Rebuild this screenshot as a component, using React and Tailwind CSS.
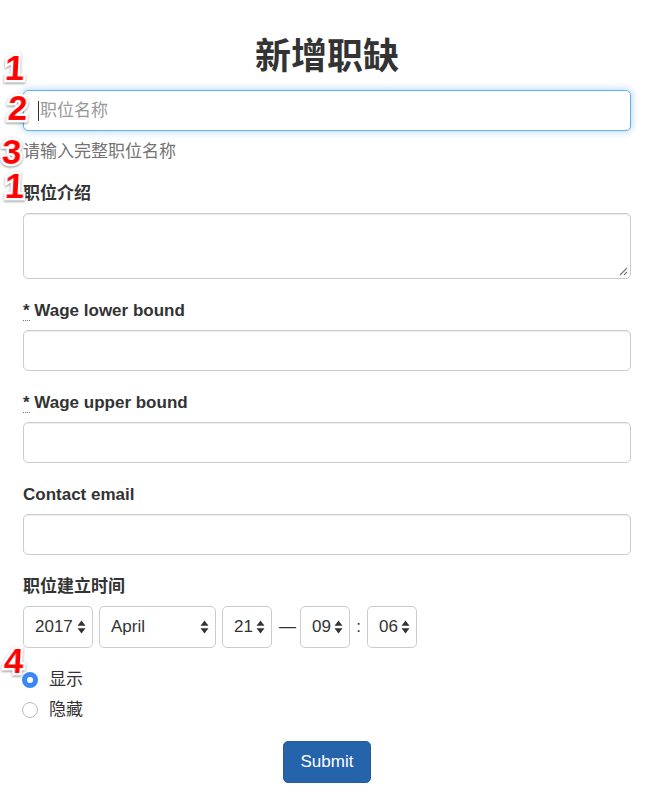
import React from "react";

const FONT = { fontFamily: '"Liberation Sans", "Noto Sans CJK SC", sans-serif' };

function Mark({ n, className }) {
  return (
    <span
      className={
        "absolute -skew-x-3 text-[35px] font-bold leading-none text-[#f00] [-webkit-text-stroke:5px_white] [paint-order:stroke_fill] drop-shadow-[0_1px_1px_rgba(0,0,0,0.45)] " +
        className
      }
    >
      {n}
    </span>
  );
}

function Arrows() {
  return (
    <svg
      className="pointer-events-none absolute right-[6px] top-1/2 -translate-y-1/2"
      width="9"
      height="14"
      viewBox="0 0 9 14"
    >
      <path d="M4.5 0.5 L8.5 5.8 L0.5 5.8 Z" fill="#333" />
      <path d="M4.5 13.5 L8.5 8.2 L0.5 8.2 Z" fill="#333" />
    </svg>
  );
}

function Select({ value, w }) {
  return (
    <div className={"relative h-[42px] rounded-[5px] border border-[#ccc] bg-white " + w}>
      <div className="flex h-full items-center pl-[11px] text-[17px] text-[#333]">{value}</div>
      <Arrows />
    </div>
  );
}

function Label({ children, req }) {
  return (
    <div className="text-[17px] font-bold leading-[24px] text-[#333]">
      {req && (
        <span className="border-b border-dotted border-[#777] leading-[14px]">*</span>
      )}
      {req && " "}
      {children}
    </div>
  );
}

function Input() {
  return (
    <div className="h-[41px] w-full rounded-[5px] border border-[#ccc] bg-white shadow-[inset_0_1px_1px_rgba(0,0,0,0.075)]" />
  );
}

function Radio({ checked, label }) {
  return (
    <div className="flex h-[30px] items-center">
      {checked ? (
        <span className="ml-[22px] flex h-[16px] w-[16px] items-center justify-center rounded-full bg-[#3a87f5]">
          <span className="h-[6px] w-[6px] rounded-full bg-white" />
        </span>
      ) : (
        <span className="ml-[22px] h-[16px] w-[16px] rounded-full border border-[#bbb] bg-white" />
      )}
      <span className="ml-[11px] text-[17px] text-[#333]">{label}</span>
    </div>
  );
}

export default function App() {
  return (
    <div className="relative flow-root h-[800px] w-[671px] bg-white" style={FONT}>
      <div className="ml-[23px] w-[608px] pt-[37px]">
        <h1 className="text-center text-[36px] font-bold leading-[40px] text-[#333]">
          新增职缺
        </h1>

        <div className="relative mt-[13px] h-[41px] rounded-[5px] border border-[#66afe9] bg-white shadow-[0_0_8px_rgba(102,175,233,0.6)]">
          <span className="absolute left-[14px] top-[10px] h-[20px] w-px bg-[#333]" />
          <span className="absolute left-[16px] top-0 flex h-full items-center text-[17px] text-[#999]">
            职位名称
          </span>
        </div>

        <div className="mt-[9px] text-[17px] leading-[24px] text-[#737373]">请输入完整职位名称</div>

        <div className="mt-[18px]">
          <Label>职位介绍</Label>
        </div>
        <div className="relative mt-[7px] h-[66px] rounded-[5px] border border-[#ccc] bg-white shadow-[inset_0_1px_1px_rgba(0,0,0,0.075)]">
          <svg className="absolute bottom-[2px] right-[2px]" width="9" height="9" viewBox="0 0 9 9">
            <path d="M8 1 L1 8 M8 5 L5 8" stroke="#777" strokeWidth="1.1" />
          </svg>
        </div>

        <div className="mt-[20px]">
          <Label req>Wage lower bound</Label>
        </div>
        <div className="mt-[7px]">
          <Input />
        </div>

        <div className="mt-[20px]">
          <Label req>Wage upper bound</Label>
        </div>
        <div className="mt-[7px]">
          <Input />
        </div>

        <div className="mt-[20px]">
          <Label>Contact email</Label>
        </div>
        <div className="mt-[7px]">
          <Input />
        </div>

        <div className="mt-[20px]">
          <Label>职位建立时间</Label>
        </div>
        <div className="mt-[7px] flex items-center">
          <Select value="2017" w="w-[70px]" />
          <div className="w-[6px]" />
          <Select value="April" w="w-[117px]" />
          <div className="w-[6px]" />
          <Select value="21" w="w-[50px]" />
          <span className="mx-[7px] w-[14px] text-center text-[17px] text-[#333]">—</span>
          <Select value="09" w="w-[50px]" />
          <span className="w-[17px] text-center text-[17px] text-[#333]">:</span>
          <Select value="06" w="w-[50px]" />
        </div>
      </div>

      <div className="mt-[17px]">
        <Radio checked label="显示" />
        <Radio label="隐藏" />
      </div>

      <div className="ml-[23px] mt-[16px] flex w-[608px] justify-center">
        <button className="h-[42px] w-[88px] rounded-[5px] border border-[#245d9e] bg-[#2563ab] text-[17px] text-white">
          Submit
        </button>
      </div>

      <Mark n="1" className="left-[5px] top-[50px]" />
      <Mark n="2" className="left-[8px] top-[90px]" />
      <Mark n="3" className="left-[2px] top-[134px]" />
      <Mark n="1" className="left-[5px] top-[168px]" />
      <Mark n="4" className="left-[4px] top-[643px]" />
    </div>
  );
}
